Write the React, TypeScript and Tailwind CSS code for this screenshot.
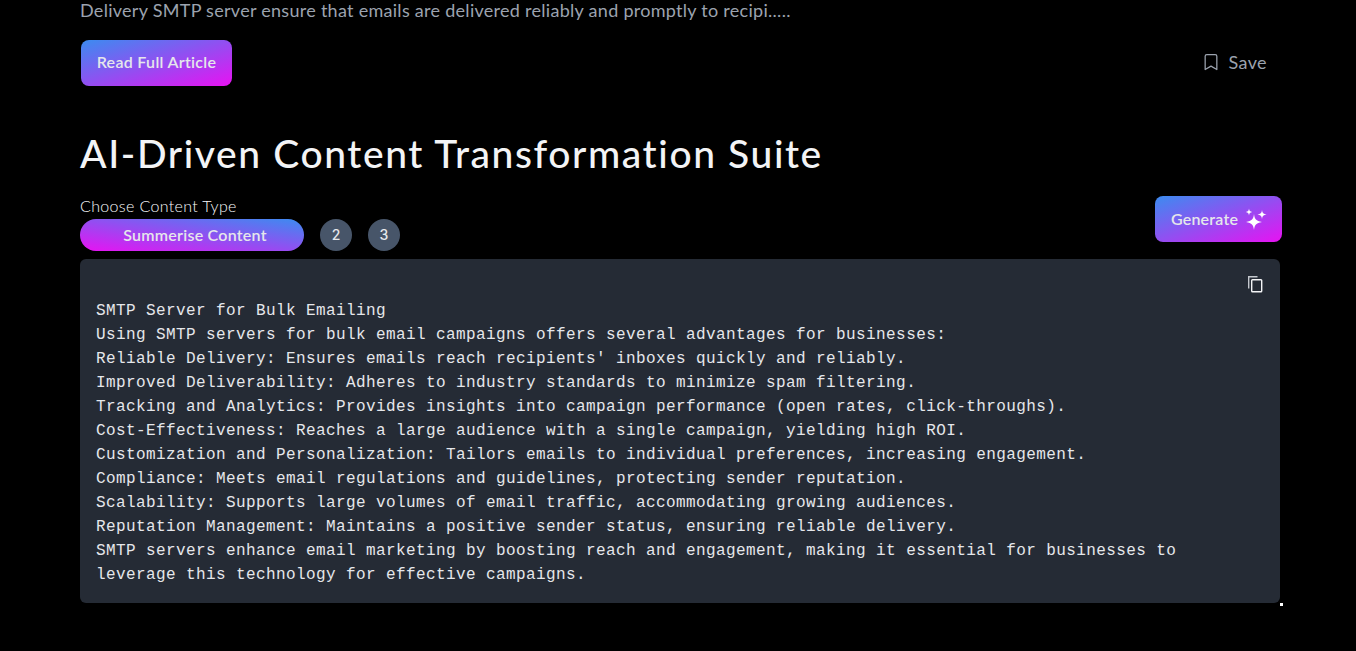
import { Bookmark } from "lucide-react";

const lines = [
  "SMTP Server for Bulk Emailing",
  "Using SMTP servers for bulk email campaigns offers several advantages for businesses:",
  "Reliable Delivery: Ensures emails reach recipients' inboxes quickly and reliably.",
  "Improved Deliverability: Adheres to industry standards to minimize spam filtering.",
  "Tracking and Analytics: Provides insights into campaign performance (open rates, click-throughs).",
  "Cost-Effectiveness: Reaches a large audience with a single campaign, yielding high ROI.",
  "Customization and Personalization: Tailors emails to individual preferences, increasing engagement.",
  "Compliance: Meets email regulations and guidelines, protecting sender reputation.",
  "Scalability: Supports large volumes of email traffic, accommodating growing audiences.",
  "Reputation Management: Maintains a positive sender status, ensuring reliable delivery.",
  "SMTP servers enhance email marketing by boosting reach and engagement, making it essential for businesses to leverage this technology for effective campaigns.",
];

function Sparkles() {
  return (
    <svg width="22" height="22" viewBox="0 0 22 22" fill="white">
      <path d="M9 6 C9.6 11 11 13 17 14 C11 15 9.6 17 9 22 C8.4 17 7 15 1 14 C7 13 8.4 11 9 6Z" />
      <path d="M17 2 C17.3 5 18.4 6 21.5 6.5 C18.4 7 17.3 8 17 11 C16.7 8 15.6 7 12.5 6.5 C15.6 6 16.7 5 17 2Z" />
      <path d="M4 .5 C4.3 2.8 5 3.6 7.2 4 C5 4.4 4.3 5.2 4 7.5 C3.7 5.2 3 4.4 .8 4 C3 3.6 3.7 2.8 4 .5Z" />
    </svg>
  );
}

function CopyIcon() {
  return (
    <svg width="16" height="18" viewBox="0 0 16 18" fill="none" className="absolute right-[17px] top-[16px]">
      <path d="M1.7 13.5 V1.7 H10.5" stroke="#c4c8ce" strokeWidth="1.4" />
      <rect x="4.7" y="4.7" width="10" height="12" rx="0.8" stroke="#f3f4f6" strokeWidth="1.4" />
    </svg>
  );
}

export default function App() {
  return (
    <div className="min-h-[651px] bg-black font-['Lato',sans-serif] overflow-hidden">
      <div className="ml-20 w-[1202px] flex flex-col">
        <p className="h-5 text-[18px] leading-5 text-[#9ca3af] tracking-[0.28px]">
          Delivery SMTP server ensure that emails are delivered reliably and promptly to recipi.....
        </p>
        <div className="mt-5 flex items-center justify-between">
          <button className="ml-px w-[151px] h-[46px] pb-[2px] rounded-lg bg-linear-to-br/srgb from-[#3b8cf0] to-[#e812f2] text-[#e5e7eb] text-[16px] font-semibold tracking-[0.3px]">
            Read Full Article
          </button>
          <div className="flex items-center gap-[7px] mr-[15px] text-[#9ca3af] pb-[2px]">
            <Bookmark size={20} strokeWidth={1.5} className="text-[#9ca3af]" />
            <span className="text-[18px] tracking-[0.4px]">Save</span>
          </div>
        </div>
        <h1 className="mt-[42px] h-[50px] text-[39px] leading-[50px] text-[#f3f4f6] font-medium tracking-[1.6px]">
          AI-Driven Content Transformation Suite
        </h1>
        <div className="mt-[10px] flex items-start justify-between">
          <div className="flex flex-col">
            <label className="mt-2 h-5 text-[16px] leading-5 text-[#f9fafb] font-light tracking-[0.35px]">
              Choose Content Type
            </label>
            <div className="flex items-center gap-4 mt-[3px]">
              <button className="w-56 h-8 pb-[1px] pl-[6px] rounded-full bg-linear-to-tr/srgb from-[#e812f2] to-[#3b8cf0] text-[#e5e7eb] text-[16px] tracking-[0.25px] font-semibold">
                Summerise Content
              </button>
              <span className="w-8 h-8 rounded-full bg-[#475569] flex items-center justify-center text-sm text-[#e5e7eb] font-['Inter',sans-serif] font-medium">
                2
              </span>
              <span className="w-8 h-8 rounded-full bg-[#475569] flex items-center justify-center text-sm text-[#e5e7eb] font-['Inter',sans-serif] font-medium">
                3
              </span>
            </div>
          </div>
          <button className="mt-2 w-[127px] h-[46px] rounded-lg bg-linear-to-br/srgb from-[#3b8cf0] to-[#e812f2] text-[#e5e7eb] text-[16px] font-semibold tracking-[0.2px] flex items-center justify-start pl-4 gap-[7px]">
            Generate
            <Sparkles />
          </button>
        </div>
        <div className="relative mt-2 w-[1200px] h-[344px] rounded-md bg-[#252b35] pt-10 px-4">
          <CopyIcon />
          <div className="font-['Liberation_Mono',monospace] text-base leading-6 tracking-wide text-[#e5e7eb]">
            {lines.map((l) => (
              <div key={l}>{l}</div>
            ))}
          </div>
          <span className="absolute -right-[3px] -bottom-[3px] w-[3px] h-[3px] bg-white" />
        </div>
      </div>
    </div>
  );
}
